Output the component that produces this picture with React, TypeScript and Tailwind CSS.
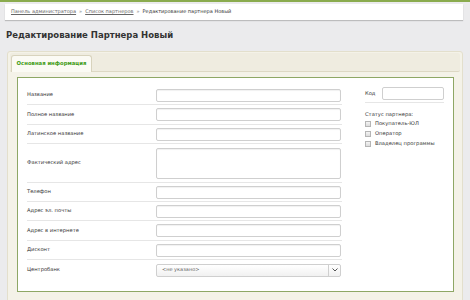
import { useState } from 'react'

type Row = { label: string; tall?: boolean; h: number; select?: boolean }

const rows: Row[] = [
  { label: 'Название', h: 19 },
  { label: 'Полное название', h: 20 },
  { label: 'Латинское название', h: 19 },
  { label: 'Фактический адрес', h: 39, tall: true },
  { label: 'Телефон', h: 19 },
  { label: 'Адрес эл. почты', h: 19 },
  { label: 'Адрес в интернете', h: 20 },
  { label: 'Дисконт', h: 19 },
  { label: 'Центробанк', h: 20, select: true },
]

const statuses = ['Покупатель-ЮЛ', 'Оператор', 'Владелец программы']

export default function App() {
  const [checked, setChecked] = useState<Record<string, boolean>>({})

  return (
    <div className="h-[300px] w-[470px] overflow-hidden bg-[#ebebed] font-['DejaVu_Sans',sans-serif] text-[#333]">
      <div className="h-[2px] bg-[#8aab4e]" />

      <div className="ml-[5px] mt-[2px] flex h-[16px] w-[458px] items-center gap-[3px] bg-white px-[6px] text-[5px] shadow-[0_1px_1px_rgba(0,0,0,0.2)]">
        <a className="text-[#666] underline">Панель администратора</a>
        <span className="text-[#888]">»</span>
        <a className="text-[#666] underline">Список партнеров</a>
        <span className="text-[#888]">»</span>
        <span className="text-[#333]">Редактирование партнера Новый</span>
      </div>

      <h1 className="ml-[6px] mt-[8px] h-[20px] text-[8.5px] font-bold leading-[14px]">
        Редактирование Партнера Новый
      </h1>

      <div className="ml-[7px] mt-[3px] h-[260px] w-[456px] rounded-[3px] border border-[#e3dfcc] bg-[#f4f2e8] px-[2px] pt-[1px]">
        <div className="flex h-[19px] items-end rounded-[2px] border-b border-[#ddd8c4] bg-[#efece0] pl-[1px]">
          <div className="-mb-px flex h-[17px] w-[81px] items-center justify-center rounded-t-[3px] border border-b-0 border-[#d8d3bd] bg-[#fbfaf4] text-[5.3px] font-bold text-[#3f9a14]">
            Основная информация
          </div>
        </div>

        <div className="ml-[7px] mt-[5px] flex h-[215px] w-[437px] border border-[#8ea765] bg-white pl-[9px] pt-[8px]">
          <div className="w-[315px]">
            {rows.map((r, i) => (
              <div
                key={r.label}
                style={{ height: r.h }}
                className={`flex items-center ${i < rows.length - 1 ? 'border-b border-[#e6e6e6]' : ''}`}
              >
                <div className="w-[129px] text-[5.2px]">{r.label}</div>
                {r.select ? (
                  <div className="flex h-[13px] w-[185px] items-center rounded-[2px] border border-[#cfcfcf] bg-gradient-to-b from-white to-[#f1f1f1]">
                    <span className="flex-1 pl-[5px] text-[5px] text-[#666]">&lt;не указано&gt;</span>
                    <span className="flex h-full w-[12px] items-center justify-center border-l border-[#cfcfcf]">
                      <svg width="6" height="4" viewBox="0 0 6 4">
                        <path d="M0.5 0.5 L3 3 L5.5 0.5" fill="none" stroke="#555" strokeWidth="1" />
                      </svg>
                    </span>
                  </div>
                ) : (
                  <div
                    className={`${r.tall ? 'h-[31px]' : 'h-[13px]'} w-[185px] rounded-[2px] border border-[#cfcfcf] bg-white shadow-[inset_0_1px_1px_rgba(0,0,0,0.06)]`}
                  />
                )}
              </div>
            ))}
          </div>

          <div className="ml-[23px] w-[79px]">
            <div className="flex h-[17px] items-center border-b border-[#e6e6e6] pb-[1px]">
              <span className="w-[17px] text-[5.2px]">Код</span>
              <div className="h-[13px] w-[62px] rounded-[2px] border border-[#cfcfcf] bg-white" />
            </div>
            <div className="mt-[8px] text-[5.2px] leading-[7px]">Статус партнера:</div>
            <div className="mt-[2px] flex flex-col gap-[3px]">
              {statuses.map((s) => (
                <label key={s} className="flex h-[7px] items-center gap-[4px] text-[5.2px]">
                  <span
                    onClick={() => setChecked((p) => ({ ...p, [s]: !p[s] }))}
                    className="h-[6px] w-[6px] border border-[#b5b5b5] bg-gradient-to-b from-[#f4f4f4] to-[#dcdcdc]"
                  />
                  {s}
                  {checked[s] && <span className="sr-only">on</span>}
                </label>
              ))}
            </div>
          </div>
        </div>
      </div>
    </div>
  )
}
